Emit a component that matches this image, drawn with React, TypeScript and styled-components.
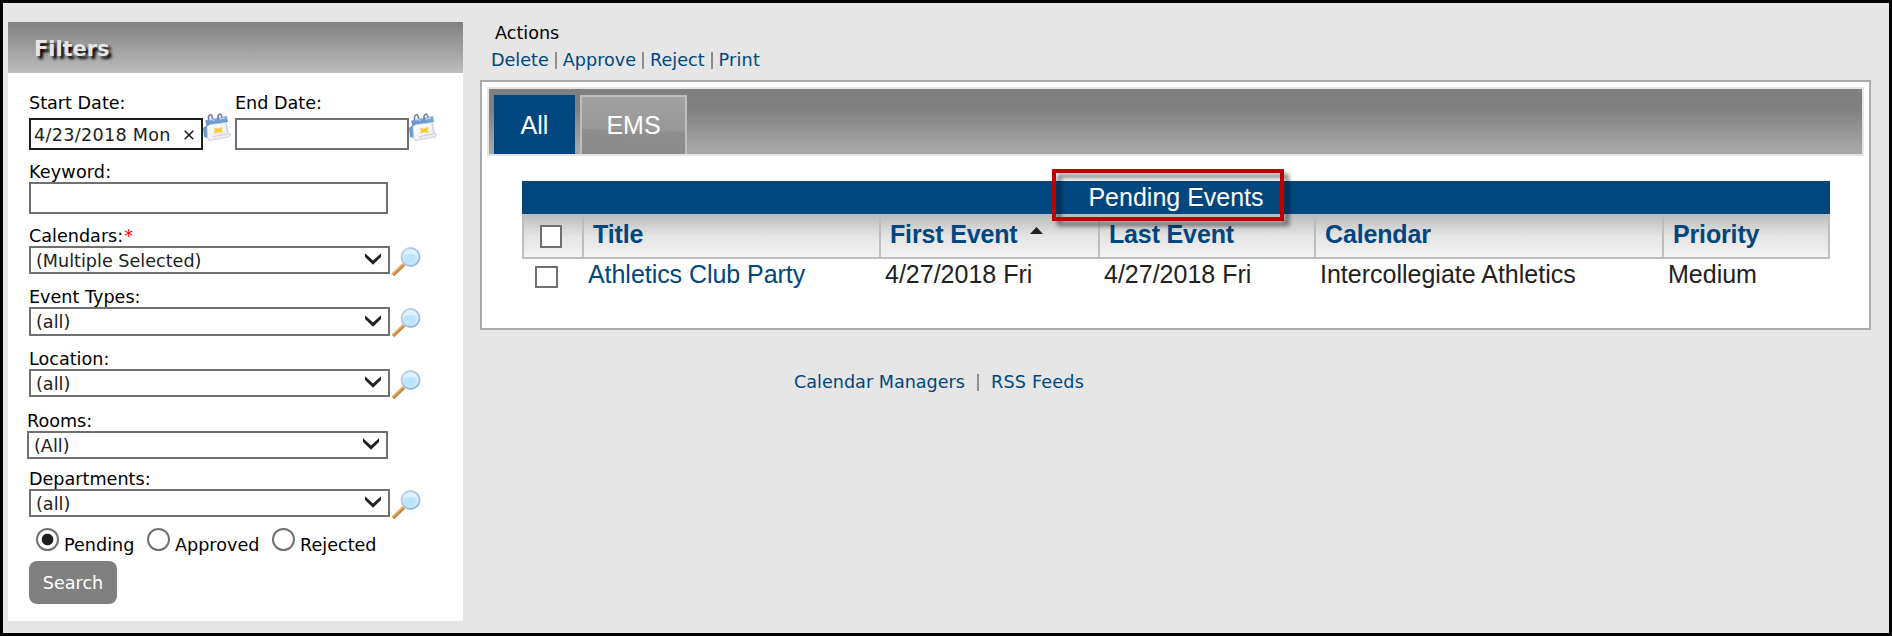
import React from "react";
import styled, { createGlobalStyle } from "styled-components";

const Global = createGlobalStyle`
  * { box-sizing: border-box; }
  body { margin: 0; background: #e6e6e6; }
`;

const sans = `"DejaVu Sans", Verdana, sans-serif`;
const arial = `"Liberation Sans", Arial, sans-serif`;

const Frame = styled.div`
  width: 1892px;
  height: 636px;
  border: 3px solid #000;
  background: #e6e6e6;
  display: flex;
  align-items: flex-start;
  padding: 19px 0 0 5px;
  font-family: ${sans};
  font-size: 17.6px;
  line-height: 20px;
  color: #000;
  overflow: hidden;
`;

const Text = styled.span<{ $track?: number }>`
  letter-spacing: ${(p) => p.$track ?? 0}px;
  white-space: nowrap;
`;

const Sidebar = styled.aside`
  width: 455px;
  height: 599px;
  background: #fff;
  flex: none;
`;

const SidebarTitle = styled.h2`
  margin: 0;
  height: 51px;
  padding: 3px 0 0 26px;
  display: flex;
  align-items: center;
  background: linear-gradient(#808080, #bdbdbd);
  color: #e5e5e5;
  font-size: 21px;
  font-weight: bold;
  letter-spacing: -0.05px;
  text-shadow: 3px 3px 3px #000;
`;

const Form = styled.form`
  padding: 20px 0 0 21px;
`;

const DateRow = styled.div`
  display: flex;
`;

const DateField = styled.div`
  width: 206px;
`;

const Field = styled.div<{ $top: number; $shift?: number }>`
  padding-top: ${(p) => p.$top}px;
  margin-left: ${(p) => p.$shift ?? 0}px;
`;

const Label = styled.label<{ $gap?: number }>`
  display: block;
  height: 20px;
  margin-bottom: ${(p) => p.$gap ?? 0}px;
`;

const Required = styled.span`
  color: #f00;
  margin-left: 1px;
`;

const Controls = styled.div`
  display: flex;
`;

const TextBox = styled.div<{ $width: number; $active?: boolean }>`
  width: ${(p) => p.$width}px;
  height: 32px;
  border: 2px solid ${(p) => (p.$active ? "#1e1e1e" : "#707070")};
  background: #fff;
  color: #212121;
  display: flex;
  align-items: center;
  justify-content: space-between;
  padding: 2px 7px 0 3px;
  flex: none;
`;

const Select = styled.div<{ $height: number }>`
  width: 361px;
  height: ${(p) => p.$height}px;
  border: 2px solid #707070;
  background: #fff;
  color: #212121;
  display: flex;
  align-items: center;
  justify-content: space-between;
  padding: 1px 7px 0 5px;
  flex: none;
`;

const Icon = styled.svg<{ $x?: number; $y?: number }>`
  display: block;
  flex: none;
  margin: ${(p) => p.$y ?? 0}px 0 0 ${(p) => p.$x ?? 0}px;
`;

const Radios = styled.div`
  display: flex;
  padding: 11px 0 0 7px;
  height: 44px;
`;

const RadioItem = styled.div<{ $width: number }>`
  width: ${(p) => p.$width}px;
  display: flex;
  flex: none;
`;

const RadioMark = styled.span<{ $on?: boolean }>`
  width: 23px;
  height: 23px;
  border: 2px solid #707070;
  border-radius: 50%;
  background: ${(p) => (p.$on ? "radial-gradient(circle, #1e1e1e 5.4px, #fff 6.2px)" : "#fff")};
  margin-right: 5px;
  flex: none;
`;

const RadioLabel = styled.span`
  padding-top: 7px;
`;

const SearchButton = styled.button`
  display: block;
  width: 88px;
  height: 43px;
  padding: 0;
  border: 0;
  border-radius: 8px;
  background: #808080;
  color: #fff;
  font: 17.6px/20px ${sans};
`;

const Main = styled.main`
  margin-left: 17px;
  width: 1391px;
`;

const ActionsTitle = styled.div`
  padding: 1px 0 0 15px;
  height: 27px;
`;

const ActionLinks = styled.nav`
  display: flex;
  gap: 6px;
  padding: 1px 0 0 11px;
  height: 31px;
  color: #00467f;
`;

const Bar = styled.i<{ $inset?: number }>`
  width: 2px;
  height: 17px;
  margin: 2px ${(p) => p.$inset ?? 0}px 0;
  background: #8e8e8e;
  flex: none;
`;

const Panel = styled.section`
  height: 250px;
  border: 2px solid #a9a9a9;
  background: #fff;
  padding: 5px;
  font-family: ${arial};
  font-size: 25px;
  line-height: 30px;
`;

const TabBar = styled.div`
  height: 69px;
  border: 2px solid #e5e5e5;
  background: linear-gradient(#808080 0%, #808080 30%, #a6a6a6 92%, #a6a6a6);
  display: flex;
  gap: 5px;
  padding: 6px 0 0 5px;
`;

const Tab = styled.div<{ $active?: boolean; $width: number }>`
  width: ${(p) => p.$width}px;
  height: 59px;
  border: ${(p) => (p.$active ? "0" : "2px solid #bdbdbd")};
  border-bottom: 0;
  background: ${(p) =>
    p.$active ? "#00467f" : "linear-gradient(181.5deg, #a1a1a1 0%, #999 57%, #8f8f8f 59%, #8a8a8a 100%)"};
  padding-bottom: ${(p) => (p.$active ? 0 : 2)}px;
  display: flex;
  align-items: center;
  justify-content: center;
  color: #fff;
`;

const Table = styled.div`
  margin: 25px 34px 0 35px;
`;

const Caption = styled.div`
  position: relative;
  height: 33px;
  background: #00467f;
  color: #fff;
  text-align: center;
  line-height: 33px;
`;

const Highlight = styled.div`
  position: absolute;
  left: 530px;
  top: -12px;
  width: 232px;
  height: 52px;
  border: 4px solid #c00000;
  filter: drop-shadow(5px 5px 2px rgba(0, 0, 0, 0.5));
  z-index: 1;
`;

const columns = "60px 297px 219px 216px 348px 168px";

const HeadRow = styled.div`
  display: grid;
  grid-template-columns: ${columns};
  height: 45px;
  background: linear-gradient(#bdbdbd 4%, #e5e5e5 52%, #f3f3f3);
  border-bottom: 2px solid #bdbdbd;
  border-right: 2px solid #bdbdbd;
  color: #00467f;
  font-weight: bold;
  letter-spacing: -0.15px;
  line-height: 41px;
`;

const HeadCell = styled.div`
  border-left: 2px solid #bdbdbd;
  padding-left: 9px;
  display: flex;
`;

const BodyRow = styled.div`
  display: grid;
  grid-template-columns: ${columns};
  height: 32px;
  line-height: 30px;
  color: #212121;
`;

const BodyCell = styled.div<{ $link?: boolean }>`
  padding-left: 6px;
  white-space: nowrap;
  ${(p) => p.$link && "color: #00467f; letter-spacing: -0.05px;"}
`;

const CheckBox = styled.span<{ $head?: boolean }>`
  display: block;
  width: ${(p) => (p.$head ? 22 : 23)}px;
  height: ${(p) => (p.$head ? 23 : 22)}px;
  margin: ${(p) => (p.$head ? "11px 0 0 7px" : "7px 0 0 7px")};
  border: 2px solid #707070;
  background: #fff;
`;

const Footer = styled.footer`
  display: flex;
  padding: 42px 0 0 314px;
  color: #00467f;
`;

const Chevron = () => (
  <Icon width="16" height="12" viewBox="0 0 16 12" $y={-3}>
    <path d="M0 .2 8 7.500 16 .2v3.800L8 11.700 0 4z" fill="#212121" />
  </Icon>
);

const Calendar = () => (
  <Icon width="28" height="28" viewBox="0 0 28 28" $y={-5}>
    <defs>
      <linearGradient id="calBlue" x1="0" y1="0" x2="0" y2="1">
        <stop offset="0" stopColor="#86b0e2" />
        <stop offset="1" stopColor="#5587c8" />
      </linearGradient>
      <linearGradient id="calPaper" x1="0" y1="0" x2="1" y2="1">
        <stop offset="0" stopColor="#fff" />
        <stop offset="1" stopColor="#e4e6ef" />
      </linearGradient>
    </defs>
    <path d="M2 7.500 24 3 25 9 4 14z" fill="url(#calBlue)" />
    <path d="M0 15 4 12 5 25 1 24z" fill="#6f96cf" />
    <path d="M4 13.500 7 11.500 23 9.500 24.500 20 27.500 21.500 26.500 24 12 26.500 6 27.500 4.500 24z" fill="url(#calPaper)" stroke="#c5cad8" strokeWidth=".8" />
    <path d="M23 10 25.500 20.500 27.500 21.500M12 25.500l-1.500-2L24 21" fill="none" stroke="#c9cede" />
    <path d="m11 15 4 1 4-2-.5 3.500 1.500 2-4.500-.5-4.500 1.500 1.200-3z" fill="#ffc814" stroke="#f4dc8a" strokeWidth=".8" />
    <path d="M5.500 7.500V4Q7-.2 9 3l1 4M15 6.500V3Q17-.5 18.500 2.500l1.500 4" fill="none" stroke="#787c9b" strokeWidth="1.600" />
    <path d="M6.500 7.500Q9 5 11 8M17 6.500Q19.500 4 21.500 6" fill="none" stroke="#c9cede" strokeWidth="1.500" />
  </Icon>
);

const Magnifier = ({ y = 1 }: { y?: number }) => (
  <Icon width="29" height="29" viewBox="0 0 29 29" $x={2} $y={y}>
    <defs>
      <radialGradient id="lens" cx=".45" cy=".58" r=".55">
        <stop offset="0" stopColor="#b5e4ff" />
        <stop offset=".6" stopColor="#c1e7ff" />
        <stop offset="1" stopColor="#e1f3ff" />
      </radialGradient>
      <linearGradient id="rim" x1="0" y1="0" x2="1" y2="1">
        <stop offset="0" stopColor="#c9d3e2" />
        <stop offset="1" stopColor="#8fb0da" />
      </linearGradient>
    </defs>
    <path d="M1 28 12 17.500" stroke="#c88a45" strokeWidth="3.600" />
    <path d="M.5 26.500 11 16.500" stroke="#f0bd7a" strokeWidth="1.400" />
    <circle cx="18.500" cy="10" r="9" fill="url(#lens)" stroke="url(#rim)" strokeWidth="1.800" />
    <path d="M11 8.500Q13 3 19 3 24.500 4 25.500 8 17 6 11 8.500" fill="#fff" opacity=".4" />
  </Icon>
);

const ClearMark = () => (
  <Icon width="10" height="10" viewBox="0 0 10 10">
    <path d="m.7.7 8.600 8.600M9.300.7.7 9.300" stroke="#212121" strokeWidth="1.600" />
  </Icon>
);

type SelectProps = {
  label: string;
  value: string;
  top: number;
  height?: number;
  shift?: number;
  required?: boolean;
  lookup?: boolean;
};

const SelectField = ({ label, value, top, height = 28, shift, required, lookup = true }: SelectProps) => (
  <Field $top={top} $shift={shift}>
    <Label>
      <Text>{label}</Text>
      {required && <Required>*</Required>}
    </Label>
    <Controls style={{ height }}>
      <Select $height={height}>
        <Text>{value}</Text>
        <Chevron />
      </Select>
      {lookup && <Magnifier />}
    </Controls>
  </Field>
);

export default function App() {
  return (
    <>
      <Global />
      <Frame>
        <Sidebar>
          <SidebarTitle>Filters</SidebarTitle>
          <Form>
            <DateRow>
              <DateField>
                <Label $gap={5}><Text>Start Date:</Text></Label>
                <Controls>
                  <TextBox $width={174} $active>
                    <Text $track={0.3}>4/23/2018 Mon</Text>
                    <ClearMark />
                  </TextBox>
                  <Calendar />
                </Controls>
              </DateField>
              <DateField>
                <Label $gap={5}><Text>End Date:</Text></Label>
                <Controls>
                  <TextBox $width={174} />
                  <Calendar />
                </Controls>
              </DateField>
            </DateRow>
            <Field $top={12}>
              <Label><Text $track={0.15}>Keyword:</Text></Label>
              <TextBox $width={359} />
            </Field>
            <SelectField label="Calendars:" value="(Multiple Selected)" top={12} required />
            <SelectField label="Event Types:" value="(all)" top={13} height={29} />
            <SelectField label="Location:" value="(all)" top={13} />
            <SelectField label="Rooms:" value="(All)" top={14} shift={-2} lookup={false} />
            <SelectField label="Departments:" value="(all)" top={10} />
            <Radios>
              <RadioItem $width={111}><RadioMark $on /><RadioLabel><Text>Pending</Text></RadioLabel></RadioItem>
              <RadioItem $width={125}><RadioMark /><RadioLabel><Text>Approved</Text></RadioLabel></RadioItem>
              <RadioItem $width={110}><RadioMark /><RadioLabel><Text>Rejected</Text></RadioLabel></RadioItem>
            </Radios>
            <SearchButton type="button"><Text>Search</Text></SearchButton>
          </Form>
        </Sidebar>
        <Main>
          <ActionsTitle><Text>Actions</Text></ActionsTitle>
          <ActionLinks>
            <Text>Delete</Text>
            <Bar />
            <Text>Approve</Text>
            <Bar />
            <Text>Reject</Text>
            <Bar />
            <Text $track={0.2}>Print</Text>
          </ActionLinks>
          <Panel>
            <TabBar>
              <Tab $active $width={81}>All</Tab>
              <Tab $width={107}>EMS</Tab>
            </TabBar>
            <Table>
              <Caption>
                Pending Events
                <Highlight />
              </Caption>
              <HeadRow>
                <HeadCell><CheckBox $head /></HeadCell>
                <HeadCell>Title</HeadCell>
                <HeadCell>
                  First Event
                  <Icon width="13" height="7" viewBox="0 0 13 7" $x={12} $y={13}>
                    <path d="M0 7 6.500 0 13 7z" fill="#212121" />
                  </Icon>
                </HeadCell>
                <HeadCell>Last Event</HeadCell>
                <HeadCell>Calendar</HeadCell>
                <HeadCell>Priority</HeadCell>
              </HeadRow>
              <BodyRow>
                <BodyCell><CheckBox /></BodyCell>
                <BodyCell $link>Athletics Club Party</BodyCell>
                <BodyCell>4/27/2018 Fri</BodyCell>
                <BodyCell>4/27/2018 Fri</BodyCell>
                <BodyCell>Intercollegiate Athletics</BodyCell>
                <BodyCell>Medium</BodyCell>
              </BodyRow>
            </Table>
          </Panel>
          <Footer>
            <Text>Calendar Managers</Text>
            <Bar $inset={12} />
            <Text $track={0.2}>RSS Feeds</Text>
          </Footer>
        </Main>
      </Frame>
    </>
  );
}
